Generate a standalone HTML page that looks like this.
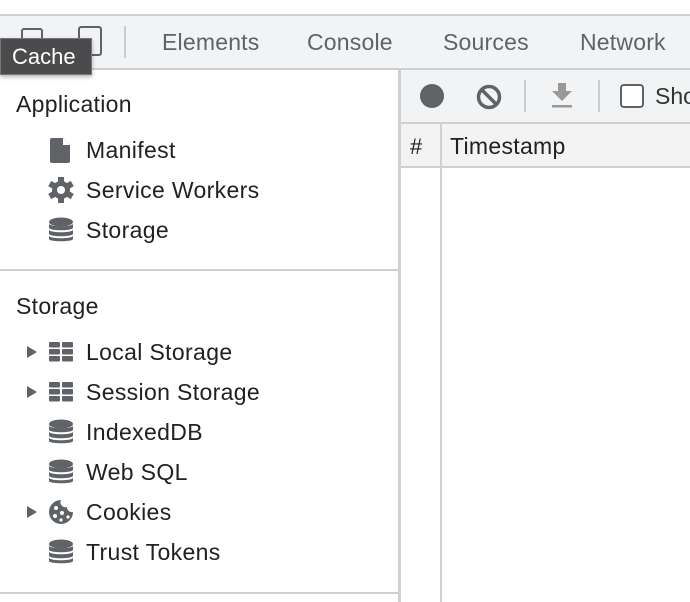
<!DOCTYPE html>
<html><head><meta charset="utf-8"><style>
*{margin:0;padding:0;box-sizing:border-box}
body{width:690px;height:602px;overflow:hidden;background:#fff;font-family:"Liberation Sans",Arial,sans-serif;position:relative;color:#202124}
.a{position:absolute}
.tab{position:absolute;top:29px;font-size:23px;color:#5f6368;letter-spacing:0.2px}
.item{position:absolute;left:86px;font-size:23px;color:#202124;letter-spacing:0.35px}
.ic{position:absolute;left:48px}
.tri{position:absolute;left:27px;width:0;height:0;border-left:10px solid #5f6368;border-top:6px solid transparent;border-bottom:6px solid transparent}
</style></head><body>
<div class="a" style="left:0;top:14px;width:690px;height:2px;background:#d0d0d3"></div>
<div class="a" style="left:0;top:16px;width:690px;height:52px;background:#f1f3f4"></div>
<div class="a" style="left:0;top:68px;width:690px;height:2px;background:#d0d0d3"></div>
<div class="a" style="left:21px;top:28px;width:22px;height:30px;border:2px solid #5f6368;border-radius:3px"></div>
<div class="a" style="left:78px;top:26px;width:24px;height:30px;border:2px solid #5f6368;border-radius:3px"></div>
<div class="a" style="left:124px;top:26px;width:2px;height:32px;background:#ccc"></div>
<div class="tab" style="left:162px">Elements</div>
<div class="tab" style="left:307px">Console</div>
<div class="tab" style="left:443px">Sources</div>
<div class="tab" style="left:580px">Network</div>
<div class="a" style="left:0;top:38px;width:92px;height:37px;background:#4b4b4d;border:1px solid #777;box-shadow:0 2px 4px rgba(0,0,0,.3);color:#fff;font-size:22px;padding:5px 0 0 11px">Cache</div>
<div class="a" style="left:398px;top:70px;width:3px;height:532px;background:#d0d0d3"></div>
<div class="a" style="left:16px;top:91px;font-size:23px;letter-spacing:0.3px">Application</div>
<svg class="ic" style="top:137px" width="26" height="26" viewBox="0 0 26 26"><path d="M4 1h11l7 7v16a2 2 0 0 1-2 2H4a2 2 0 0 1-2-2V3a2 2 0 0 1 2-2z" fill="#5f6368"/><path d="M15 1v7h7z" fill="#fff"/></svg>
<div class="item" style="top:137px">Manifest</div>
<svg class="ic" style="top:177px" width="26" height="26" viewBox="0 0 26 26"><g fill="#5f6368"><circle cx="13" cy="13" r="9"/><rect x="10" y="0" width="6" height="26"/><rect x="10" y="0" width="6" height="26" transform="rotate(60 13 13)"/><rect x="10" y="0" width="6" height="26" transform="rotate(120 13 13)"/></g><circle cx="13" cy="13" r="4" fill="#fff"/></svg>
<div class="item" style="top:177px">Service Workers</div>
<svg class="ic" style="top:217px" width="26" height="26" viewBox="0 0 26 26"><g fill="#5f6368"><ellipse cx="13" cy="5" rx="12" ry="4.5"/><path d="M1 7c2 3 22 3 24 0v4c-2 3-22 3-24 0z"/><path d="M1 13c2 3 22 3 24 0v4c-2 3-22 3-24 0z"/><path d="M1 19c2 3 22 3 24 0v3c0 3-24 3-24 0z"/></g></svg>
<div class="item" style="top:217px">Storage</div>
<div class="a" style="left:0;top:269px;width:398px;height:2px;background:#d0d0d3"></div>
<div class="a" style="left:16px;top:293px;font-size:23px;letter-spacing:0.3px">Storage</div>
<div class="tri" style="top:346px"></div>
<svg class="ic" style="top:342px" width="26" height="20" viewBox="0 0 26 20"><g fill="#5f6368"><rect x="1" y="0" width="11" height="5.5" rx="1"/><rect x="14" y="0" width="11" height="5.5" rx="1"/><rect x="1" y="7" width="11" height="5.5" rx="1"/><rect x="14" y="7" width="11" height="5.5" rx="1"/><rect x="1" y="14" width="11" height="5.5" rx="1"/><rect x="14" y="14" width="11" height="5.5" rx="1"/></g></svg>
<div class="item" style="top:339px">Local Storage</div>
<div class="tri" style="top:386px"></div>
<svg class="ic" style="top:382px" width="26" height="20" viewBox="0 0 26 20"><g fill="#5f6368"><rect x="1" y="0" width="11" height="5.5" rx="1"/><rect x="14" y="0" width="11" height="5.5" rx="1"/><rect x="1" y="7" width="11" height="5.5" rx="1"/><rect x="14" y="7" width="11" height="5.5" rx="1"/><rect x="1" y="14" width="11" height="5.5" rx="1"/><rect x="14" y="14" width="11" height="5.5" rx="1"/></g></svg>
<div class="item" style="top:379px">Session Storage</div>
<svg class="ic" style="top:419px" width="26" height="26" viewBox="0 0 26 26"><g fill="#5f6368"><ellipse cx="13" cy="5" rx="12" ry="4.5"/><path d="M1 7c2 3 22 3 24 0v4c-2 3-22 3-24 0z"/><path d="M1 13c2 3 22 3 24 0v4c-2 3-22 3-24 0z"/><path d="M1 19c2 3 22 3 24 0v3c0 3-24 3-24 0z"/></g></svg>
<div class="item" style="top:419px">IndexedDB</div>
<svg class="ic" style="top:459px" width="26" height="26" viewBox="0 0 26 26"><g fill="#5f6368"><ellipse cx="13" cy="5" rx="12" ry="4.5"/><path d="M1 7c2 3 22 3 24 0v4c-2 3-22 3-24 0z"/><path d="M1 13c2 3 22 3 24 0v4c-2 3-22 3-24 0z"/><path d="M1 19c2 3 22 3 24 0v3c0 3-24 3-24 0z"/></g></svg>
<div class="item" style="top:459px">Web SQL</div>
<div class="tri" style="top:506px"></div>
<svg class="ic" style="top:499px" width="26" height="26" viewBox="0 0 26 26"><path d="M13 1a12 12 0 1 0 12 12 5 5 0 0 1-6-5 5 5 0 0 1-6-7z" fill="#5f6368"/><g fill="#fff"><circle cx="8" cy="9" r="2"/><circle cx="14" cy="14" r="2"/><circle cx="7" cy="17" r="2"/><circle cx="13" cy="21" r="1.6"/><circle cx="20" cy="18" r="1.6"/></g></svg>
<div class="item" style="top:499px">Cookies</div>
<svg class="ic" style="top:539px" width="26" height="26" viewBox="0 0 26 26"><g fill="#5f6368"><ellipse cx="13" cy="5" rx="12" ry="4.5"/><path d="M1 7c2 3 22 3 24 0v4c-2 3-22 3-24 0z"/><path d="M1 13c2 3 22 3 24 0v4c-2 3-22 3-24 0z"/><path d="M1 19c2 3 22 3 24 0v3c0 3-24 3-24 0z"/></g></svg>
<div class="item" style="top:539px">Trust Tokens</div>
<div class="a" style="left:0;top:592px;width:398px;height:2px;background:#d0d0d3"></div>
<div class="a" style="left:401px;top:70px;width:289px;height:52px;background:#f1f3f4"></div>
<div class="a" style="left:401px;top:122px;width:289px;height:2px;background:#d0d0d3"></div>
<div class="a" style="left:420px;top:84px;width:24px;height:24px;border-radius:50%;background:#5f6368"></div>
<svg class="a" style="left:475px;top:83px" width="28" height="28" viewBox="0 0 28 28"><circle cx="14" cy="14" r="10.5" fill="none" stroke="#5f6368" stroke-width="3.5"/><path d="M7 7l14 14" stroke="#5f6368" stroke-width="3.5"/></svg>
<div class="a" style="left:524px;top:80px;width:2px;height:32px;background:#ccc"></div>
<svg class="a" style="left:551px;top:83px" width="22" height="26" viewBox="0 0 22 26"><path d="M7 0h8v8h6l-10 10L1 8h6z" fill="#999"/><rect x="1" y="22" width="20" height="2.5" fill="#999"/></svg>
<div class="a" style="left:598px;top:80px;width:2px;height:32px;background:#ccc"></div>
<div class="a" style="left:620px;top:84px;width:24px;height:24px;border:2px solid #5f6368;border-radius:4px;background:#fff"></div>
<div class="a" style="left:655px;top:83px;font-size:23px;color:#333">Show</div>
<div class="a" style="left:401px;top:124px;width:289px;height:42px;background:#f3f3f3"></div>
<div class="a" style="left:401px;top:166px;width:289px;height:2px;background:#d0d0d3"></div>
<div class="a" style="left:440px;top:124px;width:2px;height:478px;background:#d0d0d3"></div>
<div class="a" style="left:410px;top:134px;font-size:22px;color:#202124">#</div>
<div class="a" style="left:450px;top:133px;font-size:23px;color:#202124;letter-spacing:0.3px">Timestamp</div>
</body></html>
